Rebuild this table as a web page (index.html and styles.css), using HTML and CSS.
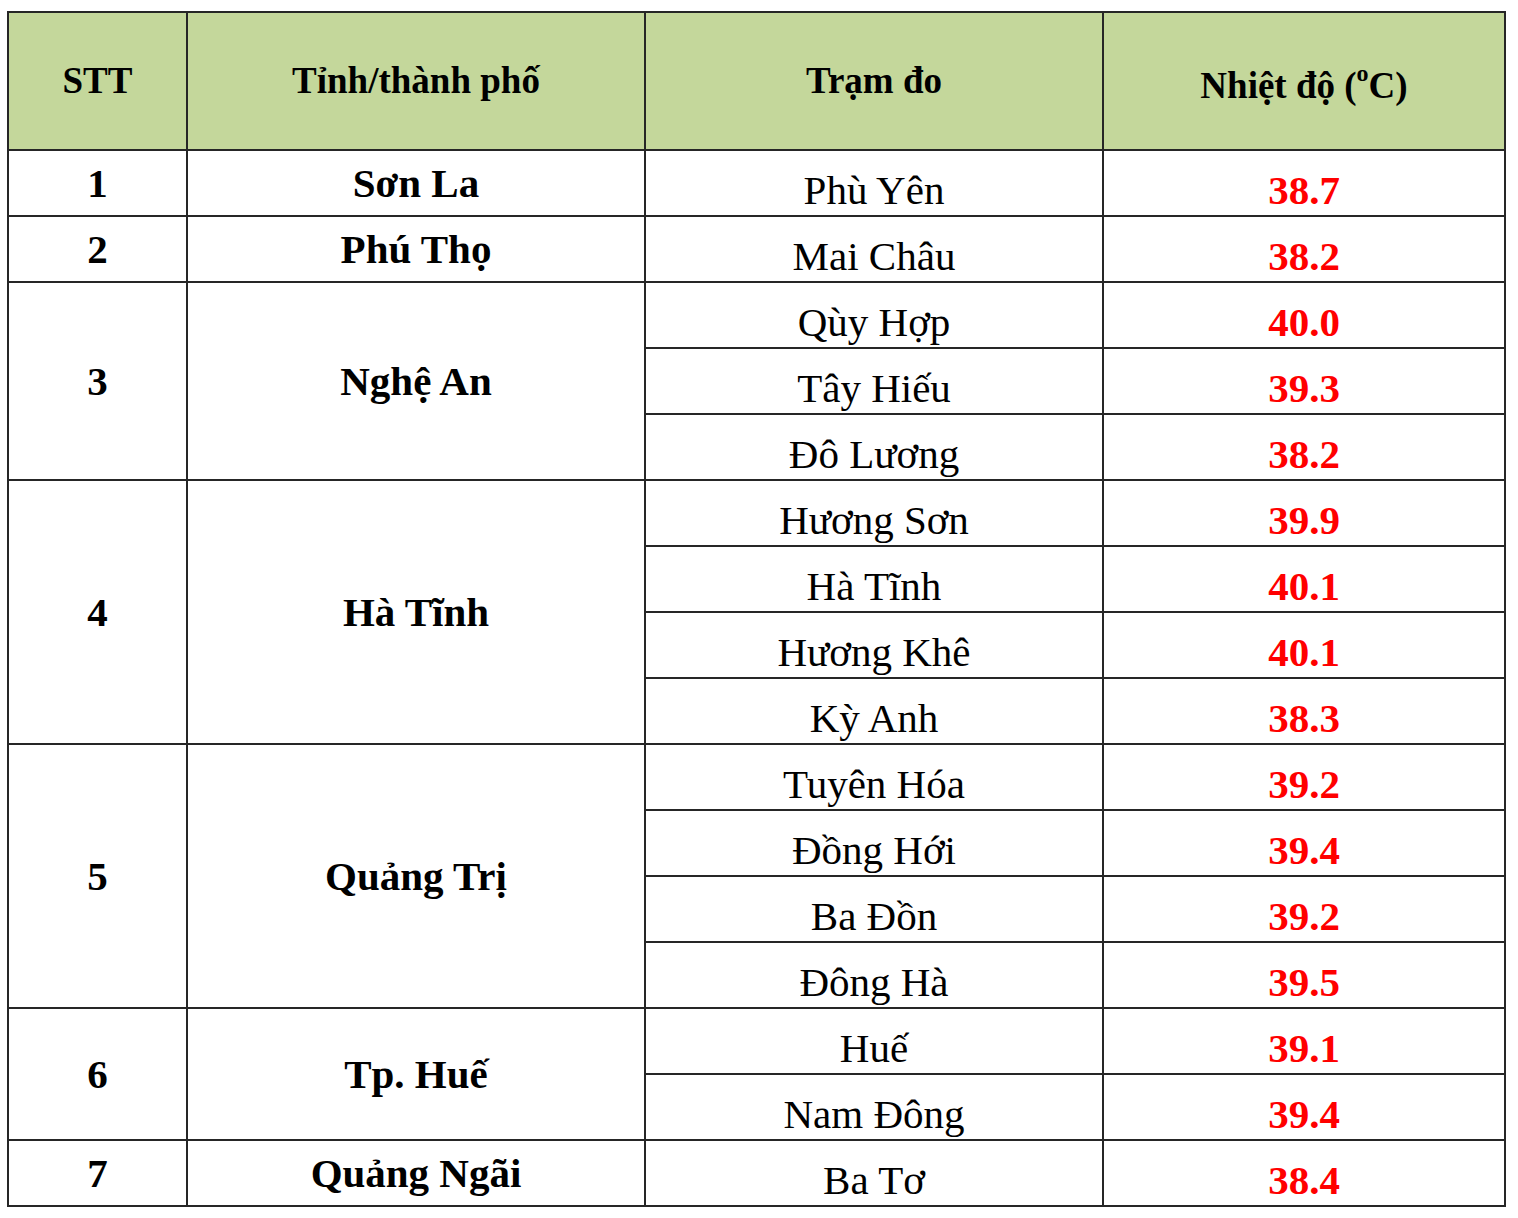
FILE: index.html
```html
<!DOCTYPE html>
<html lang="vi">
<head>
<meta charset="utf-8">
<title>Nhiệt độ</title>
<link rel="stylesheet" href="styles.css">
</head>
<body>
<table class="temp-table">
  <colgroup>
    <col class="c-stt">
    <col class="c-prov">
    <col class="c-station">
    <col class="c-temp">
  </colgroup>
  <thead>
    <tr class="head-row">
      <th>STT</th>
      <th>Tỉnh/thành phố</th>
      <th>Trạm đo</th>
      <th class="head-temp">Nhiệt độ (<sup>o</sup>C)</th>
    </tr>
  </thead>
  <tbody>
    <tr><td class="stt">1</td><td class="prov">Sơn La</td><td class="station">Phù Yên</td><td class="temp">38.7</td></tr>
    <tr><td class="stt">2</td><td class="prov">Phú Thọ</td><td class="station">Mai Châu</td><td class="temp">38.2</td></tr>
    <tr><td class="stt" rowspan="3">3</td><td class="prov" rowspan="3">Nghệ An</td><td class="station">Qùy Hợp</td><td class="temp">40.0</td></tr>
    <tr><td class="station">Tây Hiếu</td><td class="temp">39.3</td></tr>
    <tr><td class="station">Đô Lương</td><td class="temp">38.2</td></tr>
    <tr><td class="stt" rowspan="4">4</td><td class="prov" rowspan="4">Hà Tĩnh</td><td class="station">Hương Sơn</td><td class="temp">39.9</td></tr>
    <tr><td class="station">Hà Tĩnh</td><td class="temp">40.1</td></tr>
    <tr><td class="station">Hương Khê</td><td class="temp">40.1</td></tr>
    <tr><td class="station">Kỳ Anh</td><td class="temp">38.3</td></tr>
    <tr><td class="stt" rowspan="4">5</td><td class="prov" rowspan="4">Quảng Trị</td><td class="station">Tuyên Hóa</td><td class="temp">39.2</td></tr>
    <tr><td class="station">Đồng Hới</td><td class="temp">39.4</td></tr>
    <tr><td class="station">Ba Đồn</td><td class="temp">39.2</td></tr>
    <tr><td class="station">Đông Hà</td><td class="temp">39.5</td></tr>
    <tr><td class="stt" rowspan="2">6</td><td class="prov" rowspan="2">Tp. Huế</td><td class="station">Huế</td><td class="temp">39.1</td></tr>
    <tr><td class="station">Nam Đông</td><td class="temp">39.4</td></tr>
    <tr><td class="stt">7</td><td class="prov">Quảng Ngãi</td><td class="station">Ba Tơ</td><td class="temp">38.4</td></tr>
  </tbody>
</table>
</body>
</html>
```

FILE: styles.css
```css
html, body {
  background: #ffffff;
}
body {
  margin: 11px 0 0 7px;
  font-family: "Liberation Serif", "Times New Roman", serif;
  color: #000000;
}
.temp-table {
  border-collapse: collapse;
  table-layout: fixed;
  width: 1497px;
}
.c-stt { width: 179px; }
.c-prov { width: 458px; }
.c-station { width: 458px; }
.c-temp { width: 402px; }

.temp-table th,
.temp-table td {
  border: 2px solid #262626;
  padding: 0;
  text-align: center;
  white-space: nowrap;
}
.head-row th {
  height: 136px;
  background: #c4d79b;
  font-size: 37px;
  font-weight: bold;
  vertical-align: middle;
  line-height: 42px;
}
.head-row .head-temp {
  padding-top: 10px;
  height: 126px;
}
.head-row sup {
  font-size: 24px;
  line-height: 0;
  vertical-align: 17px;
}
.temp-table tbody td {
  height: 63px;
  font-size: 41px;
  line-height: 47px;
}
.stt,
.prov {
  font-weight: bold;
  vertical-align: middle;
}
.station {
  vertical-align: bottom;
  padding-bottom: 1px !important;
}
.temp {
  vertical-align: bottom;
  padding-bottom: 1px !important;
  font-weight: bold;
  color: #ff0000;
}
```
